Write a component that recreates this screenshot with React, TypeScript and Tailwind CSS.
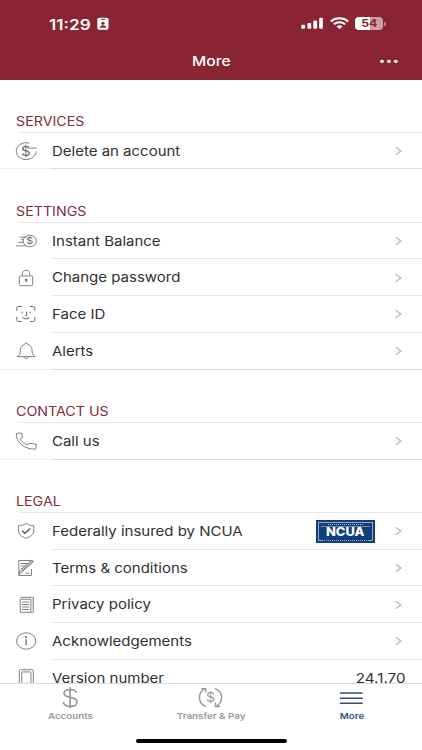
import type { ReactNode } from "react"
import clsx from "clsx"

type Item = {
    label: string
    icon: ReactNode
    badge?: boolean
    value?: string
}

type Group = {
    title: string
    items: Item[]
}

function Icon({ children }: { children: ReactNode }) {
    return <svg width="22" height="20" viewBox="0 0 22 20" fill="none" stroke="#808080" strokeWidth="1" className="shrink-0">{children}</svg>
}

function Dollar({ x, y, size }: { x: number; y: number; size: number }) {
    return <text x={x / 1.15} y={y} fontSize={size} fill="currentColor" stroke="none" textAnchor="middle" transform="scale(1.15 1)">$</text>
}

const groups: Group[] = [
    {
        title: "SERVICES",
        items: [
            {
                label: "Delete an account",
                icon: <Icon>
                    <path d="M14.3 2.2C7.5.2 1.3 4.6 1.3 10.1c0 4.7 4.2 8.4 9.7 8.4 5.3 0 9.7-3.2 10.2-8.2M15.2 7.1h6.5" />
                    <g className="text-[#686868]"><Dollar x={10.7} y={14.7} size={13} /></g>
                </Icon>,
            },
        ],
    },
    {
        title: "SETTINGS",
        items: [
            {
                label: "Instant Balance",
                icon: <Icon>
                    <ellipse cx="14.7" cy="10" rx="6.6" ry="5.8" />
                    <path d="M4.5 6.2h7M6 8.7h3M3.2 11.4h5.5M1 14.9h9.5" />
                    <g className="text-[#686868]"><Dollar x={14.7} y={13.5} size={9.5} /></g>
                </Icon>,
            },
            {
                label: "Change password",
                icon: <Icon>
                    <rect x="4.3" y="7.9" width="13.4" height="9.8" rx="1.2" />
                    <path d="M7.4 7.8V5.7c0-4.5 7.3-4.5 7.3 0v2.1" />
                    <ellipse cx="11.1" cy="11.8" rx="1.2" ry="1" fill="#555" stroke="none" />
                    <path d="M11.1 12v2.2" stroke="#555" />
                </Icon>,
            },
            {
                label: "Face ID",
                icon: <Icon>
                    <path d="M1.8 6.7V4.3c0-1.2.7-1.8 2-1.8h2.8M15 2.5h2.8c1.3 0 2 .6 2 1.8v2.4M1.8 13v2.7c0 1.2.7 1.8 2 1.8h2.8M15 17.5h2.8c1.3 0 2-.6 2-1.8V13" stroke="#666" />
                    <path d="M7.1 7.7v1.6M15.3 7.7v1.6M11.6 7.7v3.6c0 .5-.4.7-1.2.7M7.5 13.5c1.7 1.8 5.4 1.8 7.1 0" stroke="#555" />
                </Icon>,
            },
            {
                label: "Alerts",
                icon: <Icon>
                    <path d="M9.7 3.5c0-1.9 3-1.9 3 0 2.9.7 4.3 2.6 4.3 5.1 0 3.8.6 5.3 3.1 7H2.3c2.5-1.7 3.1-3.2 3.1-7 0-2.5 1.4-4.4 4.3-5.1ZM9 15.8c.2 2.2 4.3 2.2 4.5 0" />
                </Icon>,
            },
        ],
    },
    {
        title: "CONTACT US",
        items: [
            {
                label: "Call us",
                icon: <Icon>
                    <path d="M1.3 2.4 6.5 2c.6 1.5 1 2.9 1 4.3L5.2 7.7c1.2 2.5 3.4 4.6 6.9 6.3l2-1.7c2.4 0 4.8.4 7.3 1.2l-.7 4.6C10.2 18.6.5 11.7 1.3 2.4Z" />
                </Icon>,
            },
        ],
    },
    {
        title: "LEGAL",
        items: [
            {
                label: "Federally insured by NCUA",
                badge: true,
                icon: <Icon>
                    <path d="M11.2 2.5C9 4 6.2 4.7 3.6 4.7v5.1c0 3.2 3.1 6 7.6 7.5 4.5-1.5 7.6-4.3 7.6-7.5V4.7c-2.6 0-5.4-.7-7.6-2.2Z" />
                    <path d="m7 9.7 2.9 2.6 5.3-4.8" stroke="#555" strokeWidth="1.3" />
                </Icon>,
            },
            {
                label: "Terms & conditions",
                icon: <Icon>
                    <path d="M16.5 11v6.5H3.8v-15h12.7v1.8M6 5.5h8M6 8h5.5M6 10.5h3M10.5 15.2h4" />
                    <path d="M18.7 3.4 7.3 13.7l-3.8 3.2 2-4.7L16.5 2.4ZM17.5 3.2 6.5 13.2" fill="#eee" />
                </Icon>,
            },
            {
                label: "Privacy policy",
                icon: <Icon>
                    <path d="M5.2 4.2h10.7v13.2H5.2zM7 2.4h11.3v13.3M7 7h7.2M7 9.5h7.2M7 12h7.2M7 14.5h7.2" />
                    <path d="M5 2.4h13.3v15H5" stroke="#999" />
                </Icon>,
            },
            {
                label: "Acknowledgements",
                icon: <Icon>
                    <ellipse cx="11.2" cy="10" rx="9.6" ry="8.2" />
                    <path d="M11.1 8.4v5.6" stroke="#666" strokeWidth="1.3" />
                    <path d="M10 8.5h1.2M10 13.8h2.3" stroke="#999" strokeWidth=".7" />
                    <circle cx="11" cy="6" r=".9" fill="#555" stroke="none" />
                </Icon>,
            },
            {
                label: "Version number",
                value: "24.1.70",
                icon: <Icon>
                    <rect x="4.3" y="1.7" width="14" height="19" rx="1.2" />
                    <rect x="6.7" y="3.9" width="9.2" height="11.5" rx="1" />
                </Icon>,
            },
        ],
    },
]

function StatusBar() {
    return <div className="flex h-[47px] items-center pl-[49px] pr-[38px] text-white">
        <span className="w-[44px] origin-left scale-x-[1.23] pt-px text-[14px] font-semibold">11:29</span>
        <svg width="12" height="14" viewBox="0 0 12 14" className="ml-1 shrink-0">
            <rect x=".3" y=".8" width="11.2" height="12" rx="1.7" fill="white" />
            <path d="M4 2.3h4" stroke="#892532" strokeWidth="1" />
            <ellipse cx="6" cy="6.2" rx="1.7" ry="1.5" fill="#892532" />
            <path d="M2.8 10.8c0-3.3 6.4-3.3 6.4 0Z" fill="#892532" />
        </svg>
        <svg width="22" height="13" viewBox="0 0 22 13" fill="white" className="ml-auto mr-[7px] shrink-0">
            <rect x=".3" y="7.8" width="3.8" height="4" rx="1" />
            <rect x="6.4" y="6" width="3.8" height="5.8" rx="1" />
            <rect x="12.3" y="3.4" width="3.8" height="8.4" rx="1" />
            <rect x="18.2" y=".8" width="3.6" height="11" rx="1" />
        </svg>
        <svg width="19" height="13" viewBox="0 0 19 13" fill="none" stroke="white" strokeWidth="2.1" className="mr-[7px] shrink-0">
            <path d="M.8 4.5c4.8-4.3 12.6-4.3 17.4 0M3.8 7.3c3.2-2.8 8.2-2.8 11.4 0" />
            <path d="M6.5 9.4c1.7-1.4 4.3-1.4 6 0L9.5 12Z" fill="white" stroke="none" />
        </svg>
        <div className="relative mr-px flex h-[13px] w-[28px] shrink-0 items-center justify-center rounded-[4px] bg-[linear-gradient(90deg,white_55%,#cc9ea5_55%)] -ml-px">
            <span className="scale-x-[1.12] text-[11px] font-bold leading-none text-[#892532]">54</span>
            <span className="absolute -right-[3px] top-[4.5px] h-1 w-[2px] rounded-r bg-[#c18b93]"></span>
        </div>
    </div>
}

function Badge() {
    return <div className="mr-5 flex h-[23px] w-[59px] flex-col items-center justify-center bg-[#123f7b] p-[2px]">
        <div className="relative flex h-full w-full items-center justify-center border border-[#92a8c5]">
            <span className="absolute inset-x-[9px] top-px border-t border-dotted border-[#a8b8cf]"></span>
            <span className="absolute inset-x-[2px] top-[3px] border-t border-[#6f8bb0]"></span>
            <span className="scale-x-[1.12] pt-[4px] text-[11.5px] font-extrabold leading-none text-white">NCUA</span>
            <span className="absolute inset-x-1 -bottom-px border-t border-dotted border-[#123f7b]"></span>
        </div>
    </div>
}

function Row({ item, last }: { item: Item; last: boolean }) {
    return <div className="relative flex h-[36.75px] items-center pl-[15px] pr-4">
        {item.icon}
        <span className="ml-[15px] origin-left scale-x-[1.153] whitespace-nowrap pt-px text-[13px] text-[#303030]">{item.label}</span>
        <div className="ml-auto flex items-center">
            {item.badge && <Badge />}
            {item.value
                ? <span className="origin-right scale-x-[1.17] pt-px text-[13px] text-[#303030]">{item.value}</span>
                : <svg width="7" height="10" viewBox="0 0 7 10" fill="none" stroke="#b9b9bd" strokeWidth="1.4" className="mr-1"><path d="m.8 1.2 5 3.8-5 3.8" /></svg>}
        </div>
        {last && <span className="absolute bottom-0 left-0 h-px w-[52px] bg-[#ededed]"></span>}
        <span className={clsx("absolute bottom-0 left-[52px] right-0 h-px", last ? "bg-[#dcdcdc]" : "bg-[#e9e9eb]")}></span>
    </div>
}

function Tab({ label, active, children }: { label: string; active?: boolean; children: ReactNode }) {
    return <div className={clsx("flex flex-1 flex-col items-center", active ? "text-[#394d85]" : "text-[#989898]")}>
        <svg width="28" height="24" viewBox="0 0 28 24" fill="none" stroke="currentColor" className="mt-[2px]">{children}</svg>
        <span className="mt-[1px] scale-x-[1.22] whitespace-nowrap text-[8px] font-semibold leading-[10px]">{label}</span>
    </div>
}

export default function App() {
    return <div className="flex h-[750px] w-[422px] flex-col overflow-hidden bg-white font-['Inter',sans-serif]">
        <header className="h-[79.5px] shrink-0 bg-[#892532]">
            <StatusBar />
            <div className="grid h-[29px] grid-cols-3 items-center text-white">
                <span></span>
                <span className="scale-x-[1.2] pt-px text-center text-[13px] font-medium">More</span>
                <svg width="18" height="5" viewBox="0 0 18 5" fill="white" className="mr-6 justify-self-end">
                    <ellipse cx="2" cy="2.3" rx="1.9" ry="1.6" />
                    <ellipse cx="8.9" cy="2.3" rx="1.9" ry="1.6" />
                    <ellipse cx="15.8" cy="2.3" rx="1.9" ry="1.6" />
                </svg>
            </div>
        </header>
        <main className="-mt-[0.25px] min-h-0 flex-1 overflow-hidden">
            {groups.map((group) => <section key={group.title}>
                <div className="relative flex h-[53.25px] items-end px-4 pb-[2.5px]">
                    <h2 className="origin-left scale-x-[1.14] text-[12.5px] leading-4 text-[#862b3a]">{group.title}</h2>
                    <span className="absolute bottom-0 left-5 right-0 h-px bg-[#e9e9eb]"></span>
                </div>
                {group.items.map((item, i) => <Row key={item.label} item={item} last={i === group.items.length - 1} />)}
            </section>)}
        </main>
        <nav className="h-[67.5px] shrink-0 border-t border-[#dddddd] bg-white">
            <div className="flex h-[55px]">
                <Tab label="Accounts">
                    <path d="M20.5 6.8c-.5-2-3-3.3-6.3-3.3-3.7 0-6.1 1.5-6.1 3.9 0 5.7 12.9 2.3 12.9 8.6 0 2.6-2.7 4.4-6.5 4.4-4 0-6.7-1.6-7.2-4.2M14.1 1.2v21" strokeWidth="1.7" />
                </Tab>
                <Tab label="Transfer & Pay">
                    <path d="M8.8 20.6C.6 17.3.4 6.6 8 2.7M4.2 2.6h4.6v4M17.6 2.7c8.4 2.4 9.8 13 1.4 17.6M23.2 20.5h-4.7v-4" strokeWidth="1.4" />
                    <Dollar x={13.7} y={16} size={12.5} />
                </Tab>
                <Tab label="More" active>
                    <path d="M1.9 7h22.8M1.9 12.3h22.8M1.9 17.3h22.8" strokeWidth="1.5" />
                </Tab>
            </div>
            <div className="mx-auto h-1 w-[151px] rounded-full bg-black"></div>
        </nav>
    </div>
}
